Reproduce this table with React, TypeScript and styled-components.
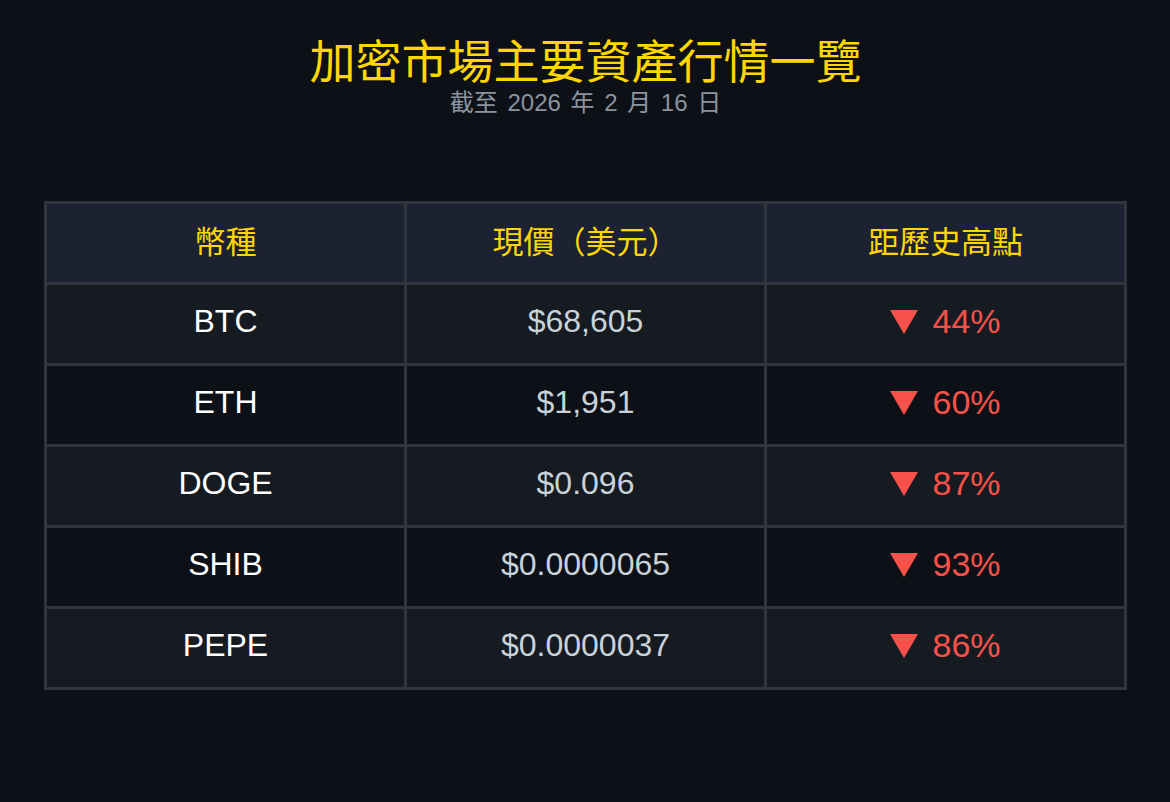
import styled, { createGlobalStyle } from "styled-components";

type Coin = {
  symbol: string;
  price: string;
  drop: string;
};

const coins: Coin[] = [
  { symbol: "BTC", price: "$68,605", drop: "44%" },
  { symbol: "ETH", price: "$1,951", drop: "60%" },
  { symbol: "DOGE", price: "$0.096", drop: "87%" },
  { symbol: "SHIB", price: "$0.0000065", drop: "93%" },
  { symbol: "PEPE", price: "$0.0000037", drop: "86%" },
];

const GlobalStyle = createGlobalStyle`
  html, body {
    margin: 0;
    padding: 0;
    background: #0d1117;
  }
  body {
    font-family: "Liberation Sans", "Noto Sans CJK TC", sans-serif;
  }
`;

const Page = styled.main`
  width: 1170px;
  height: 802px;
  box-sizing: border-box;
  padding: 35px 43px 0 44px;
  background: #0d1117;
  display: flex;
  flex-direction: column;
  align-items: center;
`;

const Header = styled.header`
  display: flex;
  flex-direction: column;
  align-items: center;
  gap: 8px;
  margin-bottom: 84px;
`;

const Title = styled.h1`
  margin: 0;
  font-family: "Noto Sans CJK TC", sans-serif;
  font-size: 46px;
  font-weight: 400;
  line-height: 46px;
  color: #ffd700;
`;

const Subtitle = styled.p`
  margin: 0;
  font-family: "Liberation Sans", "Noto Sans CJK TC", sans-serif;
  font-size: 24px;
  line-height: 28px;
  word-spacing: 3px;
  color: #8b949e;
`;

const Table = styled.table`
  width: 1083px;
  border-collapse: collapse;
  table-layout: fixed;
  border: 3px solid #30363d;
`;

const HeadCell = styled.th`
  height: 70px;
  padding: 0 0 8px;
  border: 3px solid #30363d;
  background: #1c2232;
  color: #ffd700;
  font-family: "Noto Sans CJK TC", sans-serif;
  font-size: 31px;
  font-weight: 400;
  text-align: center;
`;

const Row = styled.tr<{ $odd: boolean }>`
  background: ${props => (props.$odd ? "#161b22" : "#0d1117")};
`;

const Cell = styled.td<{ $tone: "name" | "price" }>`
  height: 74px;
  padding: 0 0 4px;
  border: 3px solid #30363d;
  text-align: center;
  font-size: 32px;
  line-height: 1.1;
  color: ${props => (props.$tone === "name" ? "#ffffff" : "#c9d1d9")};
`;

const DropCell = styled.td`
  height: 74px;
  padding: 0 0 4px;
  border: 3px solid #30363d;
`;

const Drop = styled.div`
  display: flex;
  align-items: center;
  justify-content: center;
  gap: 14px;
  color: #f85149;
  font-size: 34px;
  line-height: 1.1;
`;

function DownArrow() {
  return (
    <svg width="28" height="24" viewBox="0 0 28 24">
      <polygon points="0,0 28,0 14,24" fill="#f85149" />
    </svg>
  );
}

function App() {
  return (
    <Page>
      <GlobalStyle />
      <Header>
        <Title>加密市場主要資產行情一覽</Title>
        <Subtitle>截至 2026 年 2 月 16 日</Subtitle>
      </Header>
      <Table>
        <thead>
          <tr>
            <HeadCell>幣種</HeadCell>
            <HeadCell>現價（美元）</HeadCell>
            <HeadCell>距歷史高點</HeadCell>
          </tr>
        </thead>
        <tbody>
          {coins.map((coin, i) => (
            <Row key={coin.symbol} $odd={i % 2 === 0}>
              <Cell $tone="name">{coin.symbol}</Cell>
              <Cell $tone="price">{coin.price}</Cell>
              <DropCell>
                <Drop>
                  <DownArrow />
                  {coin.drop}
                </Drop>
              </DropCell>
            </Row>
          ))}
        </tbody>
      </Table>
    </Page>
  );
}

export default App;
